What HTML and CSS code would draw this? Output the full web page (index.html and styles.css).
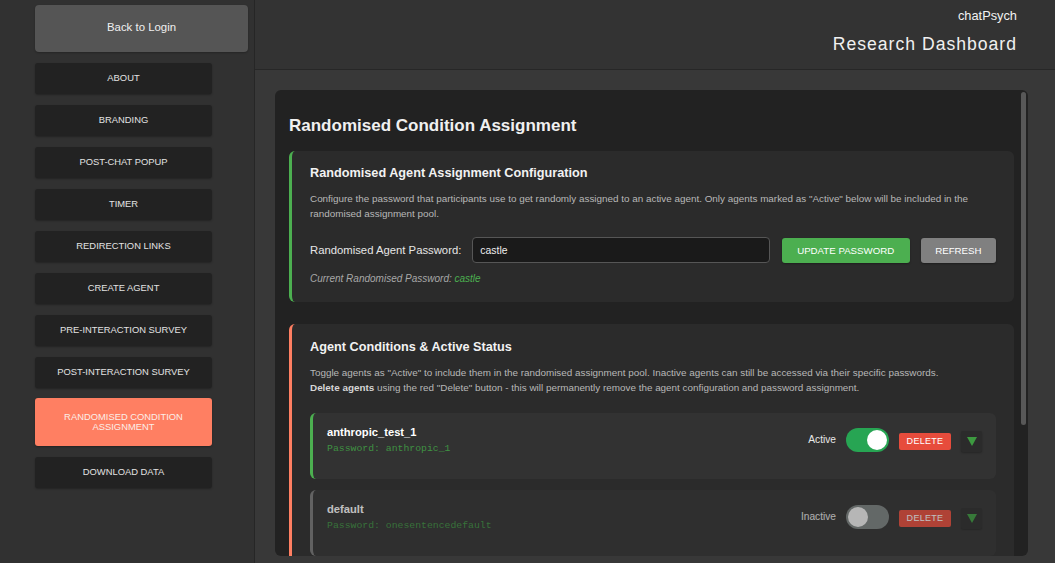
FILE: index.html
```html
<!DOCTYPE html>
<html lang="en">
<head>
<meta charset="utf-8">
<title>chatPsych – Research Dashboard</title>
<link rel="stylesheet" href="styles.css">
</head>
<body>
<div class="app">
  <aside class="sidebar">
    <button class="back-btn">Back to Login</button>
    <nav class="nav">
      <button class="nav-btn">ABOUT</button>
      <button class="nav-btn">BRANDING</button>
      <button class="nav-btn">POST-CHAT POPUP</button>
      <button class="nav-btn">TIMER</button>
      <button class="nav-btn">REDIRECTION LINKS</button>
      <button class="nav-btn">CREATE AGENT</button>
      <button class="nav-btn">PRE-INTERACTION SURVEY</button>
      <button class="nav-btn">POST-INTERACTION SURVEY</button>
      <button class="nav-btn active">RANDOMISED CONDITION ASSIGNMENT</button>
      <button class="nav-btn">DOWNLOAD DATA</button>
    </nav>
  </aside>
  <main class="main">
    <header class="header">
      <div class="brand">chatPsych</div>
      <div class="title">Research Dashboard</div>
    </header>
    <div class="content">
      <section class="panel">
        <div class="scroll-thumb"></div>
        <h2 class="panel-title">Randomised Condition Assignment</h2>

        <div class="card card-green">
          <h3 class="card-title">Randomised Agent Assignment Configuration</h3>
          <p class="card-desc">Configure the password that participants use to get randomly assigned to an active agent. Only agents marked as "Active" below will be included in the randomised assignment pool.</p>
          <div class="form-row">
            <label class="form-label">Randomised Agent Password:</label>
            <input class="form-input" type="text" value="castle">
            <button class="btn btn-green">UPDATE PASSWORD</button>
            <button class="btn btn-grey">REFRESH</button>
          </div>
          <p class="current">Current Randomised Password: <span class="current-val">castle</span></p>
        </div>

        <div class="card card-orange">
          <h3 class="card-title">Agent Conditions &amp; Active Status</h3>
          <p class="card-desc">Toggle agents as "Active" to include them in the randomised assignment pool. Inactive agents can still be accessed via their specific passwords.<br><strong>Delete agents</strong> using the red "Delete" button - this will permanently remove the agent configuration and password assignment.</p>
          <div class="agent-list">
            <div class="agent agent-active">
              <div class="agent-head">
                <div class="agent-info">
                  <div class="agent-name">anthropic_test_1</div>
                  <div class="agent-pass">Password: anthropic_1</div>
                </div>
                <div class="agent-controls">
                  <span class="status">Active</span>
                  <span class="toggle on"><span class="knob"></span></span>
                  <button class="del-btn">DELETE</button>
                  <button class="expand-btn"><svg width="10" height="9" viewBox="0 0 10 9"><polygon points="0,0 10,0 5,9" fill="#3d9a40"/></svg></button>
                </div>
              </div>
            </div>
            <div class="agent agent-inactive">
              <div class="agent-head">
                <div class="agent-info">
                  <div class="agent-name">default</div>
                  <div class="agent-pass">Password: onesentencedefault</div>
                </div>
                <div class="agent-controls">
                  <span class="status">Inactive</span>
                  <span class="toggle"><span class="knob"></span></span>
                  <button class="del-btn">DELETE</button>
                  <button class="expand-btn"><svg width="10" height="9" viewBox="0 0 10 9"><polygon points="0,0 10,0 5,9" fill="#3d9a40"/></svg></button>
                </div>
              </div>
            </div>
          </div>
        </div>
      </section>
    </div>
  </main>
</div>
</body>
</html>
```

FILE: styles.css
```css
* { box-sizing: border-box; }
html, body { margin: 0; padding: 0; height: 100%; }
body {
  font-family: "Liberation Sans", Arial, Helvetica, sans-serif;
  background: #383838;
  color: #e8e8e8;
  overflow: hidden;
}
button { font-family: inherit; cursor: pointer; }

.app { display: flex; height: 563px; }

/* Sidebar */
.sidebar {
  width: 255px;
  flex: none;
  background: #313131;
  border-right: 1px solid #262626;
  padding: 5px 0 0 35px;
}
.back-btn {
  display: block;
  width: 213px;
  height: 47px;
  border: none;
  border-radius: 4px;
  background: #555555;
  color: #f0f0f0;
  font-size: 11.4px;
  padding: 0 0 3px;
  box-shadow: 0 1px 2px rgba(0,0,0,0.25);
}
.nav { display: flex; flex-direction: column; gap: 11px; margin-top: 11px; }
.nav-btn {
  width: 177px;
  min-height: 31px;
  padding: 0 20px;
  border: none;
  border-radius: 3px;
  background: #222222;
  color: #e2e2e2;
  font-size: 9.4px;
  line-height: 10.5px;
  box-shadow: 0 1px 2px rgba(0,0,0,0.3);
}
.nav-btn.active {
  background: #ff7f62;
  color: #fbeee8;
  padding: 13.5px 20px;
  margin-top: -1px;
}

/* Main */
.main { flex: 1; display: flex; flex-direction: column; min-width: 0; }
.header {
  height: 70px;
  flex: none;
  background: #333333;
  border-bottom: 1px solid #272727;
  padding: 9px 38px 0 0;
  text-align: right;
}
.brand { font-size: 12.8px; line-height: 14px; color: #f2f2f2; }
.title {
  font-size: 17.6px;
  line-height: 22px;
  letter-spacing: 1px;
  color: #f0f0f0;
  margin-top: 10px;
}
.content {
  flex: 1;
  padding: 20px 27px 7px 20px;
  min-height: 0;
}
.panel {
  position: relative;
  height: 466px;
  background: #222222;
  border-radius: 6px;
  overflow: hidden;
  padding: 25px 14px 0 14px;
}
.scroll-thumb {
  position: absolute;
  top: 2px;
  right: 2px;
  width: 5px;
  height: 333px;
  border-radius: 3px;
  background: #585858;
}
.panel-title {
  margin: 0 0 14px;
  font-size: 17px;
  line-height: 22px;
  font-weight: bold;
  color: #f0f0f0;
}

/* Cards */
.card {
  background: #2b2b2b;
  border-radius: 6px;
  border-left: 3px solid #4caf50;
  padding: 14px 18px 16px 18px;
}
.card + .card { margin-top: 22px; }
.card-orange { border-left-color: #ff7f62; padding-top: 15px; }
.card-title {
  margin: 0;
  font-size: 12.7px;
  line-height: 16px;
  font-weight: bold;
  color: #f2f2f2;
}
.card-desc {
  margin: 9.5px 0 0;
  font-size: 9.9px;
  line-height: 15px;
  color: #b8b8b8;
}
.card-desc strong { color: #d6d6d6; }

.form-row {
  display: flex;
  align-items: center;
  gap: 11px;
  margin-top: 16.5px;
}
.form-label { font-size: 11.3px; color: #e6e6e6; }
.form-input {
  flex: 1;
  min-width: 0;
  height: 26px;
  background: #1a1a1a;
  border: 1px solid #565656;
  border-radius: 4px;
  color: #eeeeee;
  font-family: inherit;
  font-size: 10.4px;
  padding: 0 7px;
  margin-right: 1px;
}
.btn {
  height: 25px;
  border: none;
  border-radius: 3px;
  color: #ffffff;
  font-size: 9.7px;
  padding: 0 15.5px;
  box-shadow: 0 1px 2px rgba(0,0,0,0.3);
}
.btn-green { background: #4caf50; }
.btn-grey { background: #808080; padding: 0 14.5px; }
.current {
  margin: 9px 0 0;
  font-size: 10px;
  line-height: 14px;
  font-style: italic;
  color: #a8a8a8;
}
.current-val { color: #4caf50; }

/* Agents */
.agent-list { margin-top: 18.5px; display: flex; flex-direction: column; gap: 11px; }
.agent {
  background: #323232;
  border-radius: 6px;
  border-left: 3px solid #4caf50;
  padding: 11px 14px 23px 14px;
}
.agent-inactive { border-left-color: #7a7a7a; opacity: 0.7; }
.agent-head { display: flex; align-items: center; justify-content: space-between; }
.agent-name { font-size: 11.2px; line-height: 16px; font-weight: bold; color: #ffffff; }
.agent-pass {
  margin-top: 2px;
  font-family: "Liberation Mono", "Courier New", monospace;
  font-size: 9.8px;
  line-height: 14px;
  color: #3f9142;
}
.agent-controls { display: flex; align-items: center; gap: 10px; }
.status { font-size: 10.2px; color: #e8e8e8; margin-top: -1px; }
.toggle {
  position: relative;
  width: 43px;
  height: 24px;
  border-radius: 12px;
  background: #7c8281;
}
.toggle.on { background: #27a553; }
.knob {
  position: absolute;
  top: 2px;
  left: 2px;
  width: 20px;
  height: 20px;
  border-radius: 50%;
  background: #f2f2f2;
}
.toggle.on .knob { left: 21px; background: #ffffff; }
.del-btn {
  width: 52px;
  height: 17px;
  border: none;
  border-radius: 2px;
  background: #e74c3c;
  color: #ffffff;
  font-size: 9px;
  letter-spacing: 0.3px;
  padding: 0;
  margin-top: 2px;
}
.expand-btn {
  width: 21px;
  height: 21px;
  border: none;
  border-radius: 2px;
  background: #2b2b2b;
  padding: 0;
  display: flex;
  align-items: center;
  justify-content: center;
  margin-top: 3px;
  box-shadow: 0 1px 2px rgba(0,0,0,0.25);
}
```
